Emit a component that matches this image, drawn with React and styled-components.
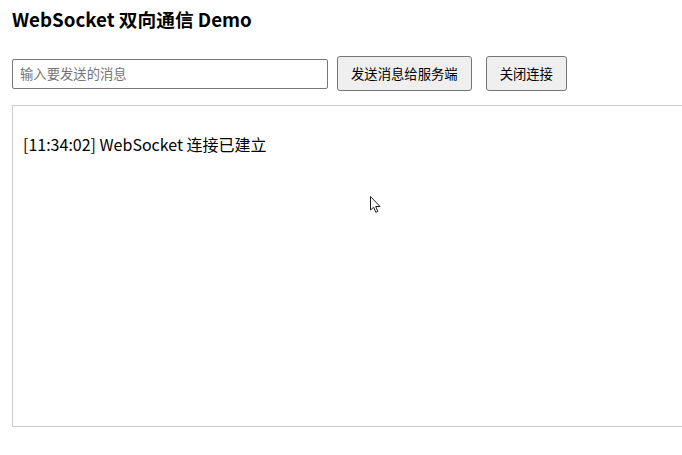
import React from 'react'
import styled, { createGlobalStyle } from 'styled-components'

const GlobalStyle = createGlobalStyle`
  body {
    margin: 0;
    padding: 0 12px;
    background: #fff;
    font-family: "Noto Sans CJK SC", "Noto Sans", sans-serif;
    color: #000;
  }
`

const Page = styled.div`
  position: relative;
  padding-top: 6px;
`

const Title = styled.h1`
  margin: 0 0 24px;
  font-size: 18.72px;
  font-weight: 700;
  line-height: 26px;
`

const Toolbar = styled.div`
  display: flex;
  align-items: center;
  height: 35px;
  margin-bottom: 14px;
`

const Input = styled.input`
  box-sizing: border-box;
  width: 316px;
  height: 30px;
  padding: 0 7px;
  border: 1px solid #767676;
  border-radius: 2px;
  font-family: inherit;
  font-size: 13.33px;
  &::placeholder {
    color: #757575;
  }
`

const Button = styled.button`
  box-sizing: border-box;
  height: 35px;
  margin-left: ${(p) => p.$gap}px;
  padding: 0 13px;
  border: 1px solid #767676;
  border-radius: 3px;
  background: #efefef;
  color: #000;
  font-family: inherit;
  font-size: 13.33px;
`

const Log = styled.div`
  box-sizing: border-box;
  width: 700px;
  height: 322px;
  padding: 10px;
  border: 1px solid #ccc;
`

const Line = styled.p`
  margin: 16px 0 0;
  font-size: 16px;
  line-height: 24px;
`

const Cursor = styled.svg`
  position: absolute;
  left: 358px;
  top: 196px;
`

export default function App() {
  return (
    <>
      <GlobalStyle />
      <Page>
        <Title>WebSocket 双向通信 Demo</Title>
        <Toolbar>
          <Input placeholder="输入要发送的消息" />
          <Button $gap={9}>发送消息给服务端</Button>
          <Button $gap={14}>关闭连接</Button>
        </Toolbar>
        <Log>
          <Line>[11:34:02] WebSocket 连接已建立</Line>
        </Log>
        <Cursor width="14" height="20" viewBox="0 0 14 20">
          <path
            d="M0.5 0.5 L0.5 14 L3.6 11.2 L5.8 16.3 L7.8 15.4 L5.7 10.5 L10 10.5 Z"
            fill="#fff"
            stroke="#222"
            strokeWidth="1"
          />
        </Cursor>
      </Page>
    </>
  )
}
